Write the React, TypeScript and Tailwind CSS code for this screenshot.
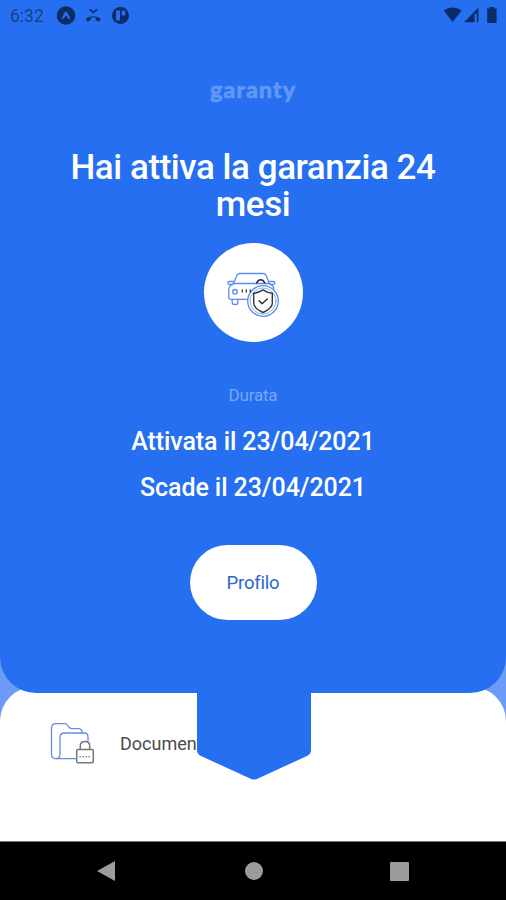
import React from "react";

function StatusBar() {
  return (
    <header className="flex h-8 w-full shrink-0 items-center text-[#0c2c68]">
      <span className="ml-[10px] w-[47px] whitespace-nowrap font-[Roboto,sans-serif] text-[17.5px] leading-8 text-[#1a3f87]">6:32</span>
      <svg width="74" height="20" viewBox="57 6 74 20" fill="none">
        <circle cx="66" cy="15.5" r="9.3" fill="currentColor" />
        <path d="M61.7 18.6 65 11.8h2l3.3 6.8-1.4.7-2.9-3.8-2.9 3.8z" fill="#266ff1" />
        <path d="M65 19.2 66 16l1 3.2z" fill="currentColor" />
        <path d="M89.5 9.3l3.8 3.1 4-3.1" stroke="currentColor" strokeWidth="1.7" />
        <path d="M85.6 19.2c4.5-3.8 10.8-3.8 15.3 0l-2.1 2.5-3-1.8v-2.2c-1.6-.5-3.5-.5-5.1 0v2.2l-3 1.8z" fill="currentColor" />
        <circle cx="120.5" cy="15.5" r="8.5" fill="currentColor" />
        <path d="M116 10.5h4v10h-4zM121.8 10.5h3.4v5h-3.4z" fill="#266ff1" />
      </svg>
      <svg className="ml-auto mr-[9px]" width="54" height="20" viewBox="443 6 54 20" fill="currentColor">
        <path d="M443.8 10.7c5.2-4.2 12.5-4.2 17.7 0L452.7 22z" />
        <path d="M464 22.3 478.4 7.5v14.8h-1.6v-8.5h-2.2v8.5z" />
        <path d="M489.5 7h4.5v1.5h2.6V23h-9.4V8.5h2.3z" />
      </svg>
    </header>
  );
}

function CarShield() {
  return (
    <svg width="54" height="48" viewBox="227 270 54 48" fill="none" strokeLinecap="round" strokeLinejoin="round">
      <g stroke="#5b8bee" strokeWidth="1.3">
        <path d="M234.5 284.5 238 276.3q.8-1.8 2.7-1.8h23.6q1.9 0 2.7 1.8l3.5 8.2" />
        <path d="M234.5 284.5h35.5M234.5 284.5q-4.7 2.3-4.7 6.5v7.3q0 2 2 2h18M270.5 284.5q3.8 2 4.5 5" />
        <path d="M234 285.5h-3.5q-1.6 0-1.6-1.5t1.6-1.5h4M271 285.5h3.2q1.6 0 1.6-1.5t-1.6-1.5h-3.4" />
        <path d="M233.2 300.5v2.8q0 2.2 2 2.2h1.6q2 0 2-2.2v-2.8" />
        <circle cx="236" cy="292.8" r="2.3" />
        <circle cx="264" cy="302" r="15.3" fill="white" />
        <circle cx="264" cy="302" r="13" strokeWidth=".7" />
      </g>
      <path d="M257.7 283.8q1.5-3 4-3t4 3" stroke="#29304b" strokeWidth="1.6" />
      <path d="M243.3 291v2M247.3 291v2M251.3 291v2" stroke="#333" strokeWidth="1.3" />
      <path d="M264 290.9q4.5 3 9.3 3.4v9.9q0 4.8-9.3 9.3-9.3-4.5-9.3-9.3v-9.9q4.8-.4 9.3-3.4z" stroke="#30343d" strokeWidth="1.4" />
      <path d="m260 301.8 3 3 5.3-4.9" stroke="#222" strokeWidth="1.3" />
    </svg>
  );
}

function FolderLock() {
  return (
    <svg width="46" height="44" viewBox="50 722 46 44" fill="none" strokeLinecap="round" strokeLinejoin="round">
      <g stroke="#6c8bdf" strokeWidth="1.3">
        <path d="M56 758.7q-4.5 0-4.5-4.5v-26q0-4.5 4.5-4.5h8.6q1.8 0 2.8 1.4l1.6 2.1q1 1.4 2.8 1.4H78q4.3 0 4.3 4.4" />
        <path d="M56 758.7q4-.2 4-4.5v-16.7q0-4.5 4.5-4.5H84q4 0 4 4v4M56 758.7h20" />
      </g>
      <g stroke="#777" strokeWidth="1.5">
        <path d="M80.3 749v-3.2q0-4.3 4.7-4.3t4.7 4.3v3.2" />
        <rect x="76.7" y="749.5" width="16.6" height="13.3" rx="1.5" fill="white" />
        <path d="M80 756.7h10" strokeWidth="1.5" strokeDasharray=".2 2.8" />
      </g>
    </svg>
  );
}

export default function App() {
  return (
    <div className="flex h-[900px] w-[506px] flex-col overflow-hidden bg-[#6b9bf4] font-[Roboto,sans-serif]">
      <main className="relative z-10 flex h-[693px] shrink-0 flex-col items-center rounded-b-[36px] bg-[#266ff1] text-white">
        <StatusBar />
        <div className="mt-[42px] h-[30px] whitespace-nowrap font-[Lato,sans-serif] text-[23.5px] font-black leading-[30px] tracking-[0.9px] text-[#6297f6] [-webkit-text-stroke:0.5px_#6297f6]">garanty</div>
        <h1 className="mt-[45px] text-center text-[35px] font-medium leading-[37px] tracking-[-0.45px]">
          <span className="block whitespace-nowrap">Hai attiva la garanzia 24</span>
          <span className="block">mesi</span>
        </h1>
        <div className="mt-[20px] flex size-[99px] shrink-0 items-center justify-center rounded-full bg-white"><CarShield /></div>
        <p className="mt-[42px] h-[22px] text-[17px] leading-[22px] tracking-[-0.2px] text-[#79a6f8]">Durata</p>
        <p className="mt-[21px] h-[30px] whitespace-nowrap text-[25px] font-medium leading-[30px] tracking-[-0.08px]">Attivata il 23/04/2021</p>
        <p className="mt-[16px] h-[30px] whitespace-nowrap text-[25px] font-medium leading-[30px] tracking-[-0.08px]">Scade il 23/04/2021</p>
        <button className="mt-[42px] flex h-[75px] w-[127px] items-center justify-center rounded-[37.5px] bg-white pt-[2px] text-[18.5px] tracking-[-0.2px] text-[#2b66d4]">Profilo</button>
        <svg className="absolute left-[197px] top-[692px]" width="114" height="90" viewBox="0 0 114 90">
          <path d="M0 0H114V58q0 4-4 6L62 86q-5 3-10 0L4 64q-4-2-4-6z" fill="#266ff1" />
        </svg>
      </main>
      <section className="-mt-[6px] flex h-[154px] shrink-0 items-start rounded-t-[34px] bg-white pl-[50px] pt-[35px]">
        <FolderLock />
        <span className="ml-[24px] mt-[9px] whitespace-nowrap text-[18px] leading-[26px] text-[#4b4b4b]">Documenti</span>
      </section>
      <nav className="flex h-[59px] shrink-0 items-center border-t border-[#777] bg-black pl-[97px]">
        <svg width="18" height="20" viewBox="0 0 18 20"><path d="M0 10 18 0v20z" fill="#9c9c9c" /></svg>
        <span className="ml-[130px] size-[18px] rounded-full bg-[#9c9c9c]" />
        <span className="ml-[127px] size-[19px] rounded-[1px] bg-[#9c9c9c]" />
      </nav>
    </div>
  );
}
